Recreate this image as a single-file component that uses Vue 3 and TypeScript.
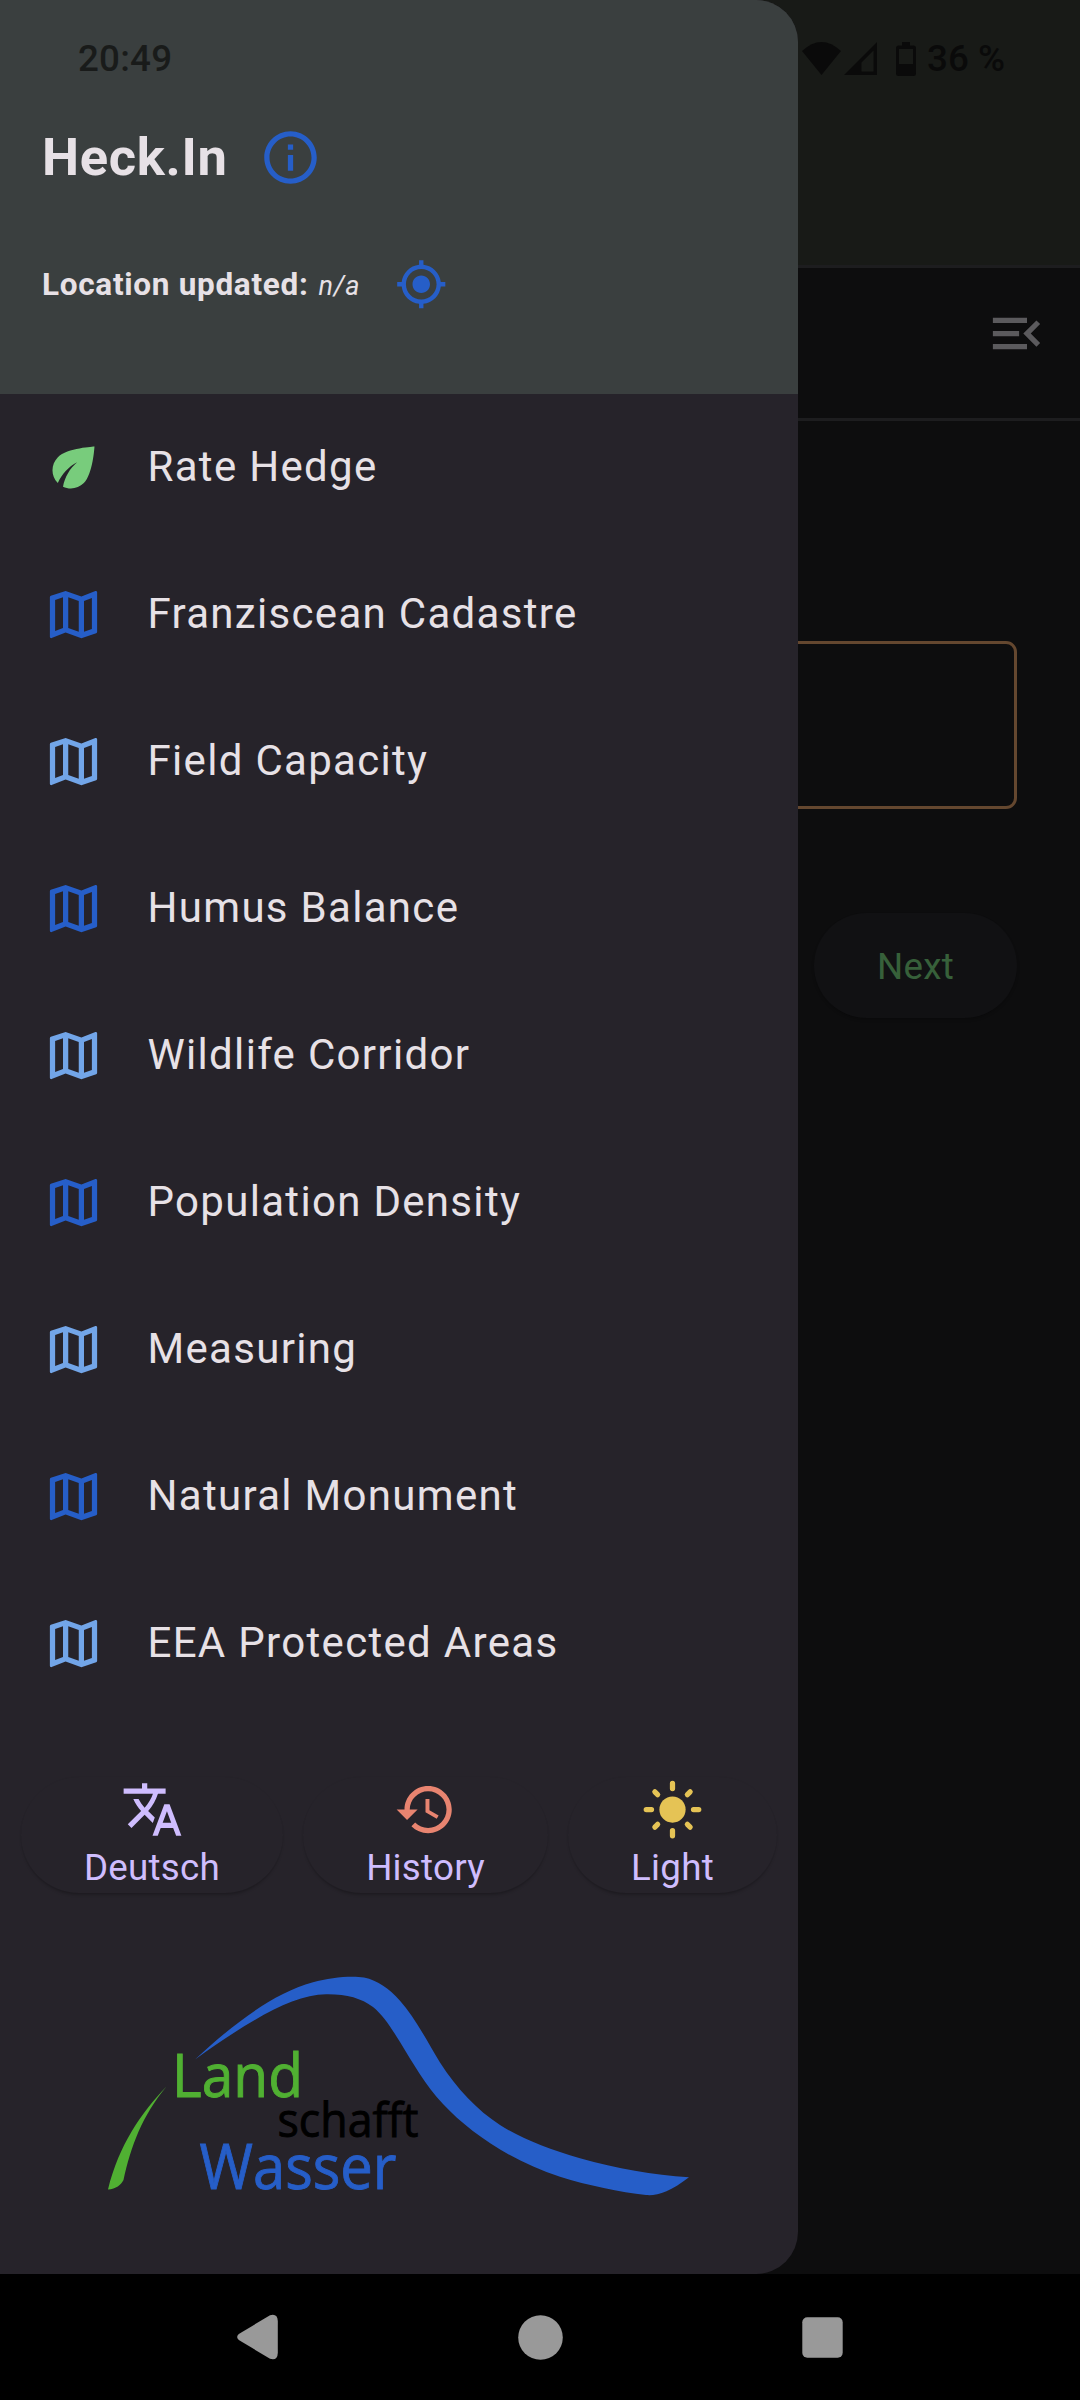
<script setup lang="ts">
interface MenuEntry {
  label: string
  icon: 'leaf' | 'map'
  tone: 'green' | 'blue' | 'sky'
}

const entries: MenuEntry[] = [
  { label: 'Rate Hedge', icon: 'leaf', tone: 'green' },
  { label: 'Franziscean Cadastre', icon: 'map', tone: 'blue' },
  { label: 'Field Capacity', icon: 'map', tone: 'sky' },
  { label: 'Humus Balance', icon: 'map', tone: 'blue' },
  { label: 'Wildlife Corridor', icon: 'map', tone: 'sky' },
  { label: 'Population Density', icon: 'map', tone: 'blue' },
  { label: 'Measuring', icon: 'map', tone: 'sky' },
  { label: 'Natural Monument', icon: 'map', tone: 'blue' },
  { label: 'EEA Protected Areas', icon: 'map', tone: 'sky' },
]

const iconPaths = {
  leaf: 'M6.05 8.05c-2.73 2.73-2.73 7.15-.02 9.88 1.47-3.4 4.09-6.24 7.36-7.93-2.77 2.34-4.71 5.61-5.39 9.32 2.6 1.23 5.8.78 7.95-1.37C19.43 14.47 20 4 20 4S9.53 4.57 6.05 8.05z',
  map: 'M20.5 3l-.16.03L15 5.1 9 3 3.36 4.9c-.21.07-.36.25-.36.48V20.5c0 .28.22.5.5.5l.16-.03L9 18.9l6 2.1 5.64-1.9c.21-.07.36-.25.36-.48V3.5c0-.28-.22-.5-.5-.5zM10 5.47l4 1.4v11.66l-4-1.4V5.47zm-5 .99l3-1.01v11.7l-3 1.16V6.46zm14 11.08l-3 1.01V6.86l3-1.16v11.84z',
}
</script>

<template>
  <div class="screen">
    <main class="page">
      <div class="page-top"></div>
      <div class="toolbar">
        <svg class="icon" viewBox="0 0 24 24"><path d="M3 18h13v-2H3v2zm0-5h10v-2H3v2zm0-7v2h13V6H3zm18 9.59L17.42 12 21 8.41 19.59 7l-5 5 5 5L21 15.59z" /></svg>
      </div>
      <div class="content">
        <div class="field"></div>
        <div class="next">Next</div>
      </div>
    </main>

    <aside class="drawer">
      <header class="drawer-head">
        <div class="title-row">
          <h1>Heck.In</h1>
          <svg class="icon" viewBox="0 0 24 24"><path d="M11 7h2v2h-2zm0 4h2v6h-2zm1-9C6.48 2 2 6.48 2 12s4.48 10 10 10 10-4.48 10-10S17.52 2 12 2zm0 18c-4.41 0-8-3.59-8-8s3.59-8 8-8 8 3.59 8 8-3.59 8-8 8z" /></svg>
        </div>
        <div class="location-row">
          <span class="location"><b>Location updated:</b> <i>n/a</i></span>
          <svg class="icon small" viewBox="0 0 24 24"><path d="M12 8c-2.21 0-4 1.79-4 4s1.79 4 4 4 4-1.79 4-4-1.79-4-4-4zm8.94 3c-.46-4.17-3.77-7.48-7.94-7.94V1h-2v2.06C6.83 3.52 3.52 6.83 3.06 11H1v2h2.06c.46 4.17 3.77 7.48 7.94 7.94V23h2v-2.06c4.17-.46 7.48-3.77 7.94-7.94H23v-2h-2.06zM12 19c-3.87 0-7-3.13-7-7s3.13-7 7-7 7 3.13 7 7-3.13 7-7 7z" /></svg>
        </div>
      </header>

      <nav class="menu">
        <div v-for="entry in entries" :key="entry.label" class="entry">
          <svg class="icon" :class="entry.tone" viewBox="0 0 24 24"><path :d="iconPaths[entry.icon]" /></svg>
          <span>{{ entry.label }}</span>
        </div>
      </nav>

      <div class="actions">
        <div class="action language">
          <svg class="icon" viewBox="0 0 24 24"><path d="M12.87 15.07l-2.54-2.51.03-.03c1.74-1.94 2.98-4.17 3.71-6.53H17V4h-7V2H8v2H1v1.99h11.17C11.5 7.92 10.44 9.75 9 11.35 8.07 10.32 7.3 9.19 6.69 8h-2c.73 1.63 1.73 3.17 2.98 4.56l-5.09 5.02L4 19l5-5 3.11 3.11.76-2.04zM18.5 10h-2L12 22h2l1.12-3h4.75L21 22h2l-4.5-12zm-2.62 7l1.62-4.33L19.12 17h-3.24z" /></svg>
          <span>Deutsch</span>
        </div>
        <div class="action history">
          <svg class="icon" viewBox="0 0 24 24"><path d="M13 3c-4.97 0-9 4.03-9 9H1l3.89 3.89.07.14L9 12H6c0-3.87 3.13-7 7-7s7 3.13 7 7-3.13 7-7 7c-1.93 0-3.68-.79-4.94-2.06l-1.42 1.42C8.27 19.99 10.51 21 13 21c4.97 0 9-4.03 9-9s-4.03-9-9-9zm-1 5v5l4.28 2.54.72-1.21-3.5-2.08V8H12z" /></svg>
          <span>History</span>
        </div>
        <div class="action light">
          <svg class="icon" viewBox="0 0 24 24">
            <circle cx="12" cy="12" r="5" />
            <path class="rays" d="M12 2v2M12 20v2M2 12h2M20 12h2M5.28 5.28l1.06 1.06M17.66 17.66l1.06 1.06M18.72 5.28l-1.06 1.06M6.34 17.66l-1.06 1.06" />
          </svg>
          <span>Light</span>
        </div>
      </div>

      <svg class="logo" viewBox="0 0 582 218" width="582" height="218">
        <path
          d="M87 82.500C120 52 162 17 205 5.300C222 0.500 243 -1.500 256 0.500C270 3.500 281 11.500 292 23.700C306 39.500 318 62 332 85.500C349 112 369 133 392 148C412 161 441 172.500 472 181.300C509 191.500 545 198 581 200.300C562 215 549 219 538 218C512 215 480 208.500 452 199.700C405 185 362 156 335 127C317 108 305 86 292 65C283 50.500 275 38 265 30C253 21 238 17 218 17.300C182 17.500 134 49 87 82.500Z"
          fill="#265ec8"
        />
        <path d="M58.500 109.500C33 136 11 168 0 212.500C8 212 13 208 15.500 203C23 169 34 139 58.500 109.500Z" fill="#50b032" />
        <g stroke-width="0.9">
          <text x="64" y="119.500" font-size="59.500" textLength="131" lengthAdjust="spacingAndGlyphs" fill="#50b032" stroke="#50b032">Land</text>
          <text x="169.500" y="159.500" font-size="47" textLength="141" lengthAdjust="spacingAndGlyphs" fill="#000" stroke="#000">schafft</text>
          <text x="91.500" y="212" font-size="61.500" textLength="197" lengthAdjust="spacingAndGlyphs" fill="#265ec8" stroke="#265ec8">Wasser</text>
        </g>
      </svg>
    </aside>

    <div class="status">
      <span class="time">20:49</span>
      <div class="indicators">
        <svg width="39" height="33" viewBox="0 0 39 33"><path d="M0 9Q19.500-9 39 9L19.500 33Z" /></svg>
        <svg class="signal" width="33" height="33" viewBox="0 0 33 33"><path fill-rule="evenodd" d="M33 0V33H0ZM29.500 8.500L17.500 20.500V29.500H29.500Z" /></svg>
        <svg class="battery" width="20" height="34" viewBox="0 0 20 34"><path fill-rule="evenodd" d="M6 0H14V3.500H17.500A2.500 2.500 0 0 1 20 6V31.500A2.500 2.500 0 0 1 17.500 34H2.500A2.500 2.500 0 0 1 0 31.500V6A2.500 2.500 0 0 1 2.500 3.500H6ZM3 7V22H17V7Z" /></svg>
        <span class="percent">36 %</span>
      </div>
    </div>

    <footer class="navbar">
      <svg width="41" height="46" viewBox="0 0 41 46"><path d="M33 1.200L1.800 20Q-1.500 23 1.800 26L33 44.800Q40.500 47 40.800 39V7Q40.500-1 33 1.200Z" /></svg>
      <svg width="45" height="45" viewBox="0 0 45 45"><circle cx="22.500" cy="22.500" r="22.300" /></svg>
      <svg width="41" height="41" viewBox="0 0 41 41"><rect x="0.300" y="0.300" width="40.400" height="40.400" rx="5" /></svg>
    </footer>
  </div>
</template>

<style>
body {
  margin: 0;
  background: #000;
}
</style>

<style scoped>
.screen {
  position: relative;
  display: flex;
  flex-direction: column;
  width: 1080px;
  height: 2400px;
  overflow: hidden;
  background: #000;
  font-family: Roboto, "Liberation Sans", sans-serif;
}
svg {
  display: block;
  flex: none;
}
.icon {
  width: 63px;
  height: 63px;
  fill: currentColor;
}
.icon.small {
  width: 52.5px;
  height: 52.5px;
}

.page {
  display: flex;
  flex-direction: column;
  height: 2274px;
  background: #0d0d0e;
}
.page-top {
  height: 265px;
  background: #181a17;
  border-bottom: 3px solid #1d1d1f;
}
.toolbar {
  box-sizing: border-box;
  display: flex;
  justify-content: flex-end;
  align-items: center;
  height: 153px;
  padding: 0 32px 20px 0;
  border-bottom: 3px solid #1d1d1f;
  color: #5b5a5d;
}
.content {
  display: flex;
  flex-direction: column;
  align-items: flex-end;
  padding: 220px 63px 0;
}
.field {
  box-sizing: border-box;
  width: 954px;
  height: 168px;
  border: 3px solid #64472f;
  border-radius: 11px;
}
.next {
  width: 203px;
  height: 105px;
  margin-top: 104px;
  border-radius: 53px;
  background: #111113;
  box-shadow: 0 2px 3px rgba(0, 0, 0, 0.2);
  color: #37603a;
  font-size: 36.75px;
  line-height: 107px;
  letter-spacing: 0.26px;
  text-align: center;
}

.drawer {
  position: absolute;
  top: 0;
  left: 0;
  display: flex;
  flex-direction: column;
  width: 798px;
  height: 2274px;
  overflow: hidden;
  border-radius: 0 42px 42px 0;
  background: #26232a;
  color: #e7e1e6;
}
.drawer-head {
  box-sizing: border-box;
  height: 394px;
  padding: 126px 42px 0;
  background: #3a3f3f;
}
.title-row,
.location-row {
  display: flex;
  align-items: center;
}
.title-row {
  height: 63px;
}
.location-row {
  height: 53px;
  margin-top: 69px;
}
.title-row .icon,
.location-row .icon {
  color: #265ec8;
}
h1 {
  width: 217px;
  margin: 0;
  font-size: 52.5px;
  font-weight: 700;
  line-height: 63px;
  letter-spacing: 0.7px;
}
.location {
  width: 353px;
  padding-top: 5px;
  white-space: nowrap;
  line-height: 53px;
}
.location b {
  font-size: 31.5px;
  letter-spacing: 0.7px;
}
.location i {
  margin-left: 6px;
  font-size: 27px;
  letter-spacing: 0.8px;
}

.entry {
  display: flex;
  align-items: center;
  gap: 42.5px;
  height: 147px;
  padding-left: 42px;
  font-size: 42px;
  letter-spacing: 1.31px;
}
.entry span {
  padding-bottom: 2px;
}
.green {
  color: #78cc7c;
}
.blue {
  color: #265ec8;
}
.sky {
  color: #72a5e8;
}

.actions {
  display: flex;
  gap: 20px;
  padding: 60px 21px 0;
}
.action {
  display: flex;
  flex-direction: column;
  align-items: center;
  height: 116px;
  border-radius: 58px;
  box-shadow: 0 3px 3px -1px rgba(0, 0, 0, 0.22), 0 0 1px rgba(0, 0, 0, 0.1);
  color: #cfbdfe;
  font-size: 36.75px;
  line-height: 43px;
  letter-spacing: 0.26px;
}
.action .icon {
  margin-top: 1px;
  margin-bottom: 5px;
}
.language {
  width: 262px;
}
.history {
  width: 245px;
}
.light {
  width: 209px;
}
.history .icon {
  color: #e88470;
}
.light .icon {
  color: #e5c355;
  overflow: visible;
}
.rays {
  fill: none;
  stroke: currentColor;
  stroke-width: 2;
  stroke-linecap: round;
}

.logo {
  margin: 84px 0 0 108px;
  overflow: visible;
  font-family: "Open Sans", "Noto Sans", sans-serif;
  font-weight: 500;
}

.status {
  position: absolute;
  top: 0;
  left: 0;
  box-sizing: border-box;
  display: flex;
  justify-content: space-between;
  width: 1080px;
  padding: 37px 75px 0 78px;
  font-size: 36.75px;
  font-weight: 500;
  line-height: 43px;
  color: #0a0a0a;
}
.time {
  color: #191b1a;
  letter-spacing: 0.2px;
}
.indicators {
  display: flex;
  align-items: center;
  fill: #0a0a0a;
}
.signal {
  margin-left: 3px;
}
.battery {
  margin-left: 19px;
}
.percent {
  margin-left: 11px;
}

.navbar {
  display: flex;
  align-items: center;
  justify-content: space-between;
  height: 126px;
  padding: 0 237px 0 237px;
  background: #000;
  fill: #999;
}
</style>
